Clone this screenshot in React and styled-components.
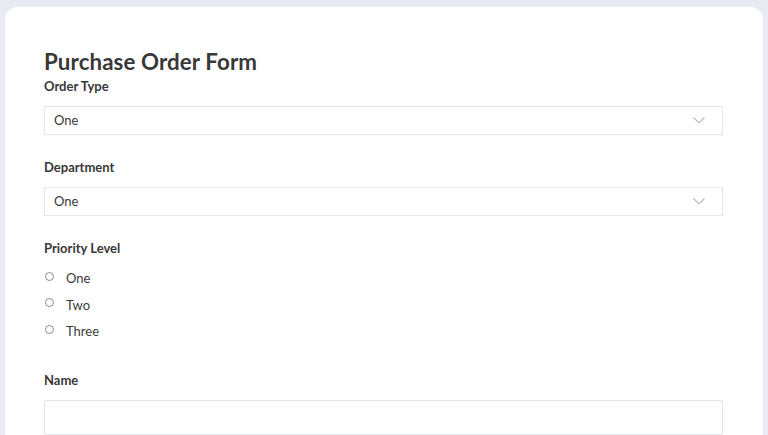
import React from "react";
import styled, { createGlobalStyle } from "styled-components";

const Global = createGlobalStyle`
  html, body { margin: 0; padding: 0; background: #e9ebf3; }
  body { font-family: Lato, "Noto Sans", sans-serif; color: #3a3a3a; }
  * { box-sizing: border-box; }
`;

const Page = styled.div`
  padding: 7px 5px 0 5px;
  height: 435px;
  overflow: hidden;
`;

const Card = styled.div`
  background: #fff;
  border-radius: 13px;
  padding: 42px 40px 40px 39px;
  min-height: 600px;
`;

const Title = styled.h1`
  margin: 0;
  font-size: 22.3px;
  line-height: 26px;
  font-weight: 700;
  color: #383838;
  letter-spacing: 0.1px;
`;

const Field = styled.div`
  display: flex;
  flex-direction: column;
  margin-top: ${(p) => p.$top}px;
`;

const Label = styled.div`
  font-size: 13px;
  font-weight: 700;
  line-height: 18px;
  color: #383838;
  margin-bottom: ${(p) => p.$gap ?? 11}px;
`;

const SelectBox = styled.div`
  height: 29px;
  border: 1px solid #e4e6ee;
  display: flex;
  align-items: center;
  justify-content: space-between;
  padding: 0 17px 1px 9px;
  font-size: 13px;
  color: #3a3a3a;
`;

const Input = styled.div`
  height: 35px;
  border: 1px solid #e2e4ec;
  border-radius: 2px;
`;

const RadioList = styled.div`
  display: flex;
  flex-direction: column;
  gap: 8.5px;
`;

const RadioRow = styled.label`
  display: flex;
  align-items: center;
  font-size: 13px;
  line-height: 18px;
  color: #3a3a3a;
`;

const Circle = styled.span`
  width: 9px;
  height: 9px;
  border: 1px solid #8a8a8a;
  border-radius: 50%;
  margin: 0 12px 0 1px;
  position: relative;
  top: -2px;
`;

const Chevron = () => (
  <svg width="12" height="7" viewBox="0 0 12 7" fill="none">
    <path d="M0.5 0.5 L6 5.8 L11.5 0.5" stroke="#b5b7bd" strokeWidth="1.1" />
  </svg>
);

const Select = ({ value }) => (
  <SelectBox>
    <span>{value}</span>
    <Chevron />
  </SelectBox>
);

export default function App() {
  return (
    <>
      <Global />
      <Page>
        <Card>
          <Title>Purchase Order Form</Title>
          <Field $top={2}>
            <Label>Order Type</Label>
            <Select value="One" />
          </Field>
          <Field $top={23}>
            <Label>Department</Label>
            <Select value="One" />
          </Field>
          <Field $top={23}>
            <Label $gap={12}>Priority Level</Label>
            <RadioList>
              <RadioRow><Circle />One</RadioRow>
              <RadioRow><Circle />Two</RadioRow>
              <RadioRow><Circle />Three</RadioRow>
            </RadioList>
          </Field>
          <Field $top={31}>
            <Label $gap={11}>Name</Label>
            <Input />
          </Field>
        </Card>
      </Page>
    </>
  );
}
